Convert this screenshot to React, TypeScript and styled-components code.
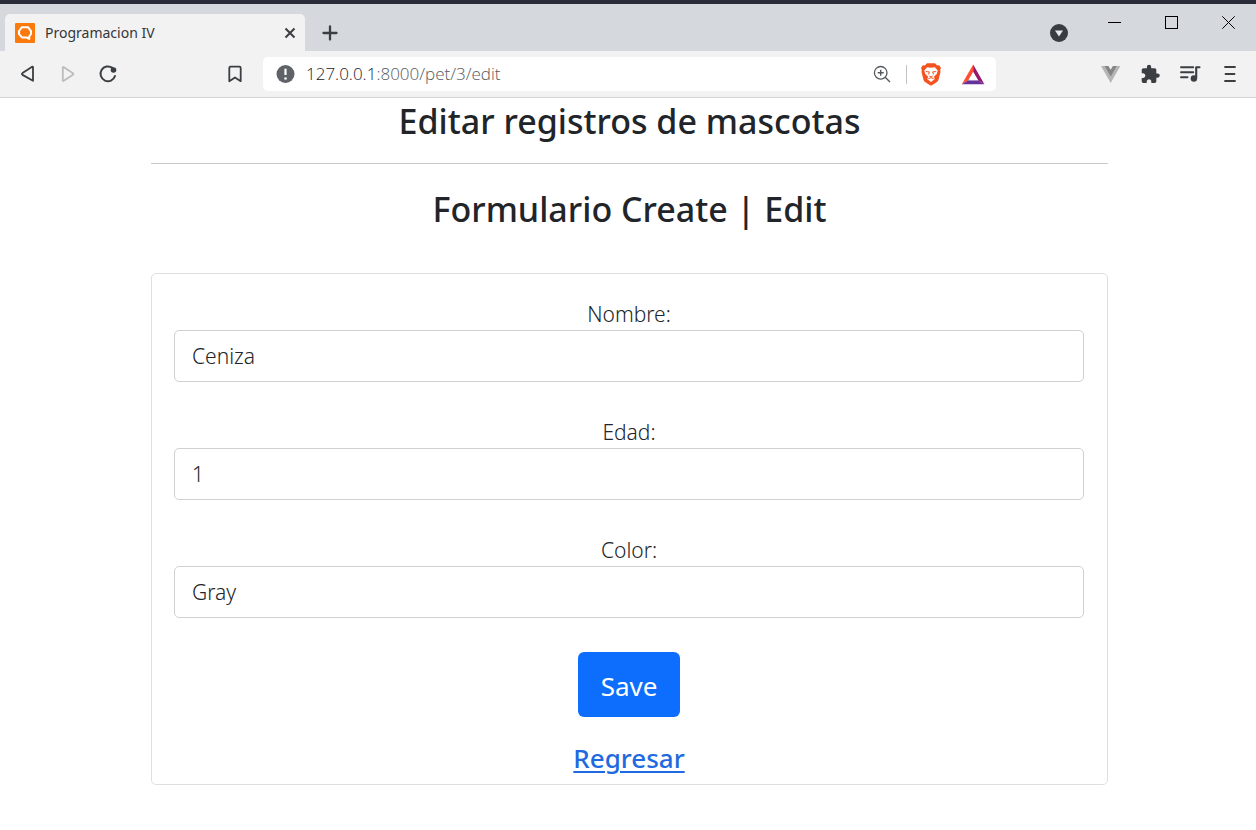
import React, { useState } from "react";
import styled, { createGlobalStyle } from "styled-components";

const GlobalStyle = createGlobalStyle`
  *, *::before, *::after { box-sizing: border-box; }
  body {
    margin: 0;
    background: #fff;
    color: #212529;
    font-family: "Segoe UI", "Noto Sans", "Open Sans", sans-serif;
  }
  svg { display: block; }
`;

const Chrome = styled.header`
  border-top: 4px solid #2a2d38;
  border-bottom: 1px solid #d3d4d6;
  background: #f2f2f2;
`;

const TabStrip = styled.div`
  display: flex;
  height: 47px;
  background: #d5d8dc;
  padding-left: 5px;
`;

const Tab = styled.div`
  display: flex;
  align-items: center;
  width: 300px;
  margin-top: 10px;
  padding: 0 8px 0 10px;
  gap: 10px;
  background: #f2f2f2;
  border-radius: 5px 5px 0 0;
`;

const TabTitle = styled.span`
  flex: 1;
  font-size: 14px;
  line-height: 20px;
  color: #33363a;
`;

const IconButton = styled.button<{ $size?: number }>`
  display: flex;
  align-items: center;
  justify-content: center;
  flex: none;
  width: ${(p) => p.$size ?? 24}px;
  height: ${(p) => p.$size ?? 24}px;
  padding: 0;
  border: 0;
  background: none;
  color: #3b3e42;
`;

const NewTab = styled(IconButton)`
  margin: 17px 0 0 13px;
`;

const WindowControls = styled.div`
  display: flex;
  margin-left: auto;
  padding-right: 16px;
`;

const TabSearch = styled(IconButton)`
  margin: 17px 31px 0 0;
`;

const WindowButtons = styled.div`
  display: flex;
  gap: 33px;
  padding-top: 6px;
`;

const Toolbar = styled.nav`
  display: flex;
  align-items: center;
  height: 46px;
  padding: 0 14px 0 16px;
`;

const NavGroup = styled.div`
  display: flex;
  gap: 16px;
`;

const Bookmark = styled(IconButton)`
  margin: 0 16px 0 103px;
`;

const AddressBar = styled.div`
  display: flex;
  align-items: center;
  flex: 1;
  height: 34px;
  padding: 0 11px 0 10px;
  background: #fff;
  border-radius: 5px;
`;

const Url = styled.span`
  flex: 1;
  margin-left: 8px;
  font-family: "Segoe UI", "Open Sans", "Noto Sans", sans-serif;
  font-size: 17px;
  line-height: 24px;
  color: #55595e;
  font-weight: 300;
`;

const Host = styled.span`
  color: #202327;
`;

const Divider = styled.span`
  width: 1px;
  height: 19px;
  margin: 0 12px;
  background: #c4c4c4;
`;

const AddressActions = styled.div`
  display: flex;
  gap: 18px;
`;

const Extensions = styled.div`
  display: flex;
  gap: 16px;
  margin-left: 102px;
`;

const Page = styled.main`
  padding: 0 148px 0 151px;
  text-align: center;
`;

const Heading = styled.h1`
  margin: 0;
  font-size: 34px;
  font-weight: 500;
  line-height: 44px;
`;

const PageTitle = styled(Heading)`
  padding: 1px 0 20px;
  border-bottom: 1px solid #c8c9ca;
`;

const FormTitle = styled(Heading).attrs({ as: "h2" })`
  padding: 23px 0 42px;
`;

const Card = styled.form`
  padding: 24px 23px 9px 22px;
  border: 1px solid #dfdfdf;
  border-radius: 5px;
`;

const Field = styled.div`
  margin-bottom: 34px;
`;

const Label = styled.label`
  display: block;
  font-size: 21px;
  font-weight: 350;
  line-height: 32px;
`;

const TextInput = styled.input`
  display: block;
  width: 100%;
  height: 52px;
  padding: 0 17px;
  border: 1px solid #ced0d4;
  border-radius: 5px;
  background: #fff;
  color: #212529;
  font-family: inherit;
  font-size: 21px;
  font-weight: 350;
`;

const SaveButton = styled.button`
  display: block;
  height: 65px;
  margin: 0 auto 24px;
  padding: 3px 23px 0;
  border: 0;
  border-radius: 6px;
  background: #0d6efd;
  color: #fff;
  font-family: inherit;
  font-size: 26px;
`;

const BackLink = styled.a`
  display: block;
  width: fit-content;
  margin: 0 auto;
  color: #1f6ae0;
  font-size: 26px;
  font-weight: 500;
  line-height: 34px;
  text-decoration-thickness: 2px;
  text-underline-offset: 3px;
`;

const stroke = {
  fill: "none",
  stroke: "currentColor",
  strokeWidth: 2,
  strokeLinecap: "round" as const,
  strokeLinejoin: "round" as const,
};

const Favicon = () => (
  <svg width="20" height="20" viewBox="0 0 20 20">
    <rect width="20" height="20" rx="1" fill="#fb7a0e" />
    <path d="M7 4.2H13L16 8.2V11L14.2 13.5V16L12 14.6H7.2L4 11V8Z" fill="none" stroke="#fff" strokeWidth="2" strokeLinejoin="round" />
  </svg>
);

const CloseTabIcon = () => (
  <svg width="14" height="14" viewBox="0 0 14 14">
    <path d="M2.5 2.5L11.5 11.5M11.5 2.5L2.5 11.5" {...stroke} strokeLinecap="butt" />
  </svg>
);

const PlusIcon = () => (
  <svg width="16" height="16" viewBox="0 0 16 16">
    <path d="M8 1.5V14.5M1.5 8H14.5" {...stroke} strokeWidth={2.3} />
  </svg>
);

const TabSearchIcon = () => (
  <svg width="18" height="18" viewBox="0 0 18 18">
    <circle cx="9" cy="9" r="9" fill="#393c40" />
    <path d="M5 6.5H13L9 12.5Z" fill="#e8eaec" />
  </svg>
);

const MinimizeIcon = () => (
  <svg width="13" height="13" viewBox="0 0 13 13">
    <path d="M0 6.5H13" stroke="#000" />
  </svg>
);

const MaximizeIcon = () => (
  <svg width="13" height="13" viewBox="0 0 13 13">
    <rect x=".5" y=".5" width="12" height="12" fill="none" stroke="#000" />
  </svg>
);

const CloseIcon = () => (
  <svg width="13" height="13" viewBox="0 0 13 13">
    <path d="M.3 .3L12.7 12.7M12.7 .3L.3 12.7" stroke="#000" />
  </svg>
);

const BackIcon = () => (
  <svg width="24" height="24" viewBox="0 0 24 24">
    <path d="M17 5.2V18.8L6.5 12.9Q5.3 12 6.5 11.1L15.8 4.9Q17 4.2 17 5.2Z" {...stroke} strokeWidth={1.8} />
  </svg>
);

const ForwardIcon = () => (
  <svg width="24" height="24" viewBox="0 0 24 24">
    <path d="M6.8 5.6V18.4Q6.8 19.4 7.8 18.8L17 12.8Q17.8 12 17 11.2L7.8 5.2Q6.8 4.6 6.8 5.6Z" {...stroke} stroke="#bbbdbf" strokeWidth={1.8} />
  </svg>
);

const ReloadIcon = () => (
  <svg width="24" height="24" viewBox="0 0 24 24">
    <path d="M16.4 5.9A7.4 7.4 0 1 0 19 14" {...stroke} />
    <circle cx="17.5" cy="8" r="2.8" fill="currentColor" />
  </svg>
);

const BookmarkIcon = () => (
  <svg width="24" height="24" viewBox="0 0 24 24">
    <path d="M6.3 6Q6.3 4.7 7.6 4.7H16.4Q17.7 4.7 17.7 6V19.2L12 15.4L6.3 19.2Z" {...stroke} strokeWidth={1.8} />
  </svg>
);

const InfoIcon = () => (
  <svg width="25" height="24" viewBox="0 0 25 24">
    <circle cx="12.5" cy="12" r="9" fill="#5f6367" />
    <path d="M12.5 6.7V13" stroke="#fff" strokeWidth="2.2" />
    <circle cx="12.5" cy="16.5" r="1.3" fill="#fff" />
  </svg>
);

const ZoomIcon = () => (
  <svg width="24" height="24" viewBox="0 0 24 24">
    <circle cx="10.7" cy="10.8" r="6.3" fill="none" stroke="#55595d" strokeWidth="1.3" />
    <path d="M15.2 15.3L20 20.1M7.7 10.8H13.7M10.7 7.8V13.8" fill="none" stroke="#55595d" strokeWidth="1.4" />
  </svg>
);

const BraveIcon = () => (
  <svg width="24" height="24" viewBox="0 0 24 24">
    <path d="M8 1.2H16L18.2 3.4L20.2 3.2L22 5.9L21.2 8L21.5 10L19.5 17.7Q19 19.2 17.6 20.2L12.9 23.2Q12 23.7 11.1 23.2L6.4 20.2Q5 19.2 4.5 17.7L2.5 10L2.8 8L2 5.9L3.8 3.2L5.8 3.4Z" fill="#f4521e" />
    <path d="M8.2 5.2L12 5.8L15.8 5.2L18.8 8.6L17.7 12L14.8 14.8L15.8 17L12 20L8.2 17L9.2 14.8L6.3 12L5.2 8.6Z" fill="#fff" />
    <path d="M6.8 9.6L10.4 9.9L9.4 12.4M17.2 9.6L13.6 9.9L14.6 12.4M10.3 14L12 15L13.7 14M9.3 16.7L12 15.6L14.7 16.7" fill="none" stroke="#f4521e" strokeWidth="1" />
  </svg>
);

const BatIcon = () => (
  <svg width="24" height="24" viewBox="0 0 24 24">
    <path d="M12.2 2.5V10L7.5 18.3L.8 22.3Z" fill="#ff5132" />
    <path d="M12.2 2.5L23.4 22.3L17 18.3L12.2 10Z" fill="#96186c" />
    <path d="M.8 22.3L7.5 18.3H17L23.4 22.3Z" fill="#65329a" />
    <path d="M12.2 10L17 18.3H7.5Z" fill="#fff" />
  </svg>
);

const VueIcon = () => (
  <svg width="24" height="24" viewBox="0 0 24 24">
    <path d="M3 4H22.3L12.7 21Z" fill="#b5b5b5" />
    <path d="M6.7 4H18.6L12.7 14.5Z" fill="#858585" />
    <path d="M10.4 4H14.9L12.7 7.8Z" fill="#f2f2f2" />
  </svg>
);

const PuzzleIcon = () => (
  <svg width="24" height="24" viewBox="0 0 24 24">
    <path
      transform="translate(2 2) scale(.86)"
      d="M20.5 11H19V7c0-1.1-.9-2-2-2h-4V3.5a2.5 2.5 0 0 0-5 0V5H4c-1.1 0-1.99.9-1.99 2v3.8H3.5c1.49 0 2.7 1.21 2.7 2.7s-1.21 2.7-2.7 2.7H2V20c0 1.1.9 2 2 2h3.8v-1.5c0-1.49 1.21-2.7 2.7-2.7s2.7 1.21 2.7 2.7V22H17c1.1 0 2-.9 2-2v-4h1.5a2.5 2.5 0 0 0 0-5z"
      fill="currentColor"
    />
  </svg>
);

const MediaIcon = () => (
  <svg width="24" height="24" viewBox="0 0 24 24">
    <path d="M3 5.3H15.2M3 10.2H15.2M3 15.2H9.5" {...stroke} strokeWidth={1.9} />
    <path d="M21.5 5.3H18.2V16" {...stroke} strokeWidth={2.1} />
    <circle cx="15.9" cy="16.5" r="3.2" fill="currentColor" />
  </svg>
);

const MenuIcon = () => (
  <svg width="24" height="24" viewBox="0 0 24 24">
    <path d="M7 5H17M7.5 12H16.5M7 19H17" {...stroke} strokeWidth={1.8} />
  </svg>
);

const initial = { nombre: "Ceniza", edad: "1", color: "Gray" };
const fields: { id: keyof typeof initial; label: string }[] = [
  { id: "nombre", label: "Nombre:" },
  { id: "edad", label: "Edad:" },
  { id: "color", label: "Color:" },
];

export default function App() {
  const [pet, setPet] = useState(initial);
  return (
    <>
      <GlobalStyle />
      <Chrome>
        <TabStrip>
          <Tab>
            <Favicon />
            <TabTitle>Programacion IV</TabTitle>
            <IconButton $size={14} aria-label="Close tab"><CloseTabIcon /></IconButton>
          </Tab>
          <NewTab aria-label="New tab"><PlusIcon /></NewTab>
          <WindowControls>
            <TabSearch aria-label="Search tabs"><TabSearchIcon /></TabSearch>
            <WindowButtons>
              <IconButton aria-label="Minimize"><MinimizeIcon /></IconButton>
              <IconButton aria-label="Maximize"><MaximizeIcon /></IconButton>
              <IconButton aria-label="Close window"><CloseIcon /></IconButton>
            </WindowButtons>
          </WindowControls>
        </TabStrip>
        <Toolbar>
          <NavGroup>
            <IconButton aria-label="Back"><BackIcon /></IconButton>
            <IconButton aria-label="Forward"><ForwardIcon /></IconButton>
            <IconButton aria-label="Reload"><ReloadIcon /></IconButton>
          </NavGroup>
          <Bookmark aria-label="Bookmark"><BookmarkIcon /></Bookmark>
          <AddressBar>
            <InfoIcon />
            <Url><Host>127.0.0.1</Host>:8000/pet/3/edit</Url>
            <IconButton aria-label="Zoom"><ZoomIcon /></IconButton>
            <Divider />
            <AddressActions>
              <IconButton aria-label="Shields"><BraveIcon /></IconButton>
              <IconButton aria-label="Rewards"><BatIcon /></IconButton>
            </AddressActions>
          </AddressBar>
          <Extensions>
            <IconButton aria-label="Vue devtools"><VueIcon /></IconButton>
            <IconButton aria-label="Extensions"><PuzzleIcon /></IconButton>
            <IconButton aria-label="Media"><MediaIcon /></IconButton>
            <IconButton aria-label="Menu"><MenuIcon /></IconButton>
          </Extensions>
        </Toolbar>
      </Chrome>
      <Page>
        <PageTitle>Editar registros de mascotas</PageTitle>
        <FormTitle>Formulario Create | Edit</FormTitle>
        <Card onSubmit={(e) => e.preventDefault()}>
          {fields.map(({ id, label }) => (
            <Field key={id}>
              <Label htmlFor={id}>{label}</Label>
              <TextInput
                id={id}
                value={pet[id]}
                onChange={(e) => setPet({ ...pet, [id]: e.target.value })}
              />
            </Field>
          ))}
          <SaveButton type="submit">Save</SaveButton>
          <BackLink href="#">Regresar</BackLink>
        </Card>
      </Page>
    </>
  );
}
